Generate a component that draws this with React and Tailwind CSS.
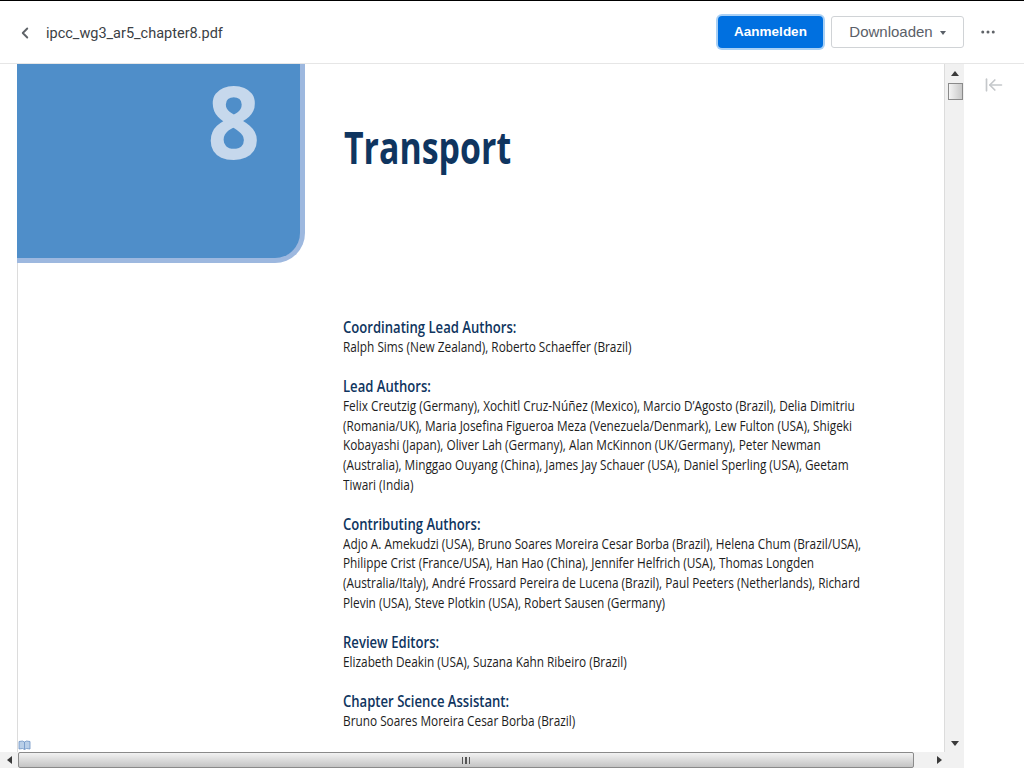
import React from 'react';
import { ChevronLeft, MoreHorizontal, ArrowLeftToLine } from 'lucide-react';

const sections = [
  {
    title: 'Coordinating Lead Authors:',
    lines: ['Ralph Sims (New Zealand), Roberto Schaeffer (Brazil)'],
  },
  {
    title: 'Lead Authors:',
    lines: [
      'Felix Creutzig (Germany), Xochitl Cruz-Núñez (Mexico), Marcio D’Agosto (Brazil), Delia Dimitriu',
      '(Romania/UK), Maria Josefina Figueroa Meza (Venezuela/Denmark), Lew Fulton (USA), Shigeki',
      'Kobayashi (Japan), Oliver Lah (Germany), Alan McKinnon (UK/Germany), Peter Newman',
      '(Australia), Minggao Ouyang (China), James Jay Schauer (USA), Daniel Sperling (USA), Geetam',
      'Tiwari (India)',
    ],
  },
  {
    title: 'Contributing Authors:',
    lines: [
      'Adjo A. Amekudzi (USA), Bruno Soares Moreira Cesar Borba (Brazil), Helena Chum (Brazil/USA),',
      'Philippe Crist (France/USA), Han Hao (China), Jennifer Helfrich (USA), Thomas Longden',
      '(Australia/Italy), André Frossard Pereira de Lucena (Brazil), Paul Peeters (Netherlands), Richard',
      'Plevin (USA), Steve Plotkin (USA), Robert Sausen (Germany)',
    ],
  },
  {
    title: 'Review Editors:',
    lines: ['Elizabeth Deakin (USA), Suzana Kahn Ribeiro (Brazil)'],
  },
  {
    title: 'Chapter Science Assistant:',
    lines: ['Bruno Soares Moreira Cesar Borba (Brazil)'],
  },
];

const pdfFont = { fontFamily: '"Open Sans", sans-serif' };

const Triangle = ({ dir }) => {
  const points = {
    up: '0,5 8,5 4,0',
    down: '0,0 8,0 4,5',
    left: '5,0 5,8 0,4',
    right: '0,0 0,8 5,4',
  };
  const vertical = dir === 'up' || dir === 'down';
  return (
    <svg width={vertical ? 8 : 5} height={vertical ? 5 : 8} viewBox={vertical ? '0 0 8 5' : '0 0 5 8'}>
      <polygon points={points[dir]} fill="#3a3a3a" />
    </svg>
  );
};

const Header = () => (
  <div className="h-[64px] shrink-0 border-t border-b border-t-black border-b-[#e6e6e6] bg-white flex items-center pl-[17px] pr-[27px]">
    <ChevronLeft size={18} strokeWidth={2.5} className="text-[#5f6368] -ml-[1px] mt-[1px]" />
    <span className="ml-[12px] mt-[3px] text-[14.5px] text-[#3b4045]" style={{ fontFamily: 'Roboto, sans-serif' }}>
      ipcc_wg3_ar5_chapter8.pdf
    </span>
    <div className="ml-auto flex items-center">
      <button className="w-[105px] h-[32px] pt-[1px] rounded-[4px] bg-[#0070e0] text-white text-[13.5px] font-bold ring-2 ring-[#a9d0f5]">
        Aanmelden
      </button>
      <button className="ml-[8px] w-[133px] h-[32px] pt-[1px] rounded-[3px] border border-[#d0d3d6] bg-white text-[15px] text-[#5a6068] flex items-center justify-center gap-[7px]">
        Downloaden
        <svg width="6" height="4" viewBox="0 0 6 4"><polygon points="0,0 6,0 3,4" fill="#5a6068" /></svg>
      </button>
      <MoreHorizontal size={18} strokeWidth={2} className="ml-[15px] text-[#5f6368]" />
    </div>
  </div>
);

const Page = () => (
  <div className="w-[928px] shrink-0 bg-white border-l border-r border-[#dcdcdc] relative" style={pdfFont}>
    <div className="flex items-start">
      <div className="-ml-[1px] w-[288px] h-[199px] shrink-0 bg-[#4f8ec9] border-r-[5px] border-b-[5px] border-[#9db8df] rounded-br-[30px] flex justify-end pr-[40px]">
        <span className="text-[#c6d8ec] text-[100px] leading-none font-bold mt-[6px] origin-right scale-x-[0.92]">
          8
        </span>
      </div>
      <h1 className="ml-[39px] mt-[56px] text-[#0f3560] text-[44px] leading-[54px] font-bold origin-left scale-x-[0.77] whitespace-nowrap">
        Transport
      </h1>
    </div>
    <div className="ml-[325px] mt-[54px] flex flex-col gap-[19.7px]">
      {sections.map((s) => (
        <div key={s.title}>
          <div className="text-[#0f3560] text-[15.5px] leading-[19.7px] pt-[1px] -mb-[1px] font-semibold origin-left scale-x-[0.845] whitespace-nowrap">
            {s.title}
          </div>
          {s.lines.map((line) => (
            <div key={line} className="text-[#1d1d1d] text-[14.5px] leading-[19.7px] origin-left scale-x-[0.815] whitespace-nowrap">
              {line}
            </div>
          ))}
        </div>
      ))}
    </div>
    {/* bookmark marker */}
    <svg className="absolute left-0 bottom-[1px]" width="13" height="11" viewBox="0 0 13 11">
      <path d="M1 1.5 L4.5 1 L6.5 2 L8.5 1 L12 1.5 V9 L8.5 8.5 L6.5 9.5 L4.5 8.5 L1 9 Z" fill="#b9cfe8" stroke="#6c93c4" strokeWidth="0.8" />
      <path d="M6.5 2 V9.5" stroke="#6c93c4" strokeWidth="0.8" />
    </svg>
  </div>
);

const VerticalScrollbar = () => (
  <div className="w-[19px] shrink-0 bg-[#f1f1f1] flex flex-col items-center relative">
    <div className="h-[19px] flex items-center justify-center"><Triangle dir="up" /></div>
    <div className="w-[15px] h-[17px] ml-[2px] border border-[#8a8a8a] bg-gradient-to-r from-[#f4f4f4] to-[#c8c8c8]" />
    <div className="flex-1" />
    <div className="h-[17px] flex items-center justify-center"><Triangle dir="down" /></div>
  </div>
);

const HorizontalScrollbar = () => (
  <div className="h-[16px] shrink-0 flex">
    <div className="w-[964px] shrink-0 bg-[#f1f1f1] flex items-center">
      <div className="w-[18px] flex justify-center"><Triangle dir="left" /></div>
      <div className="w-[896px] h-[16px] border border-[#8a8a8a] rounded-[2px] bg-gradient-to-b from-[#f2f2f2] to-[#c4c4c4] flex items-center justify-center gap-[2px]">
        <span className="w-[1.5px] h-[7px] bg-[#555]" />
        <span className="w-[1.5px] h-[7px] bg-[#555]" />
        <span className="w-[1.5px] h-[7px] bg-[#555]" />
      </div>
      <div className="flex-1 flex justify-center"><Triangle dir="right" /></div>
    </div>
    <div className="flex-1 bg-white" />
  </div>
);

const App = () => (
  <div className="w-[1024px] h-[768px] overflow-hidden bg-white flex flex-col" style={{ fontFamily: '"Liberation Sans", Arial, sans-serif' }}>
    <Header />
    <div className="flex-1 min-h-0 flex">
      <div className="w-[17px] shrink-0 bg-white" />
      <Page />
      <VerticalScrollbar />
      <div className="flex-1 flex justify-center pt-[11px]">
        <ArrowLeftToLine size={20} strokeWidth={2} className="text-[#c4c7ca]" />
      </div>
    </div>
    <HorizontalScrollbar />
  </div>
);

export default App;
